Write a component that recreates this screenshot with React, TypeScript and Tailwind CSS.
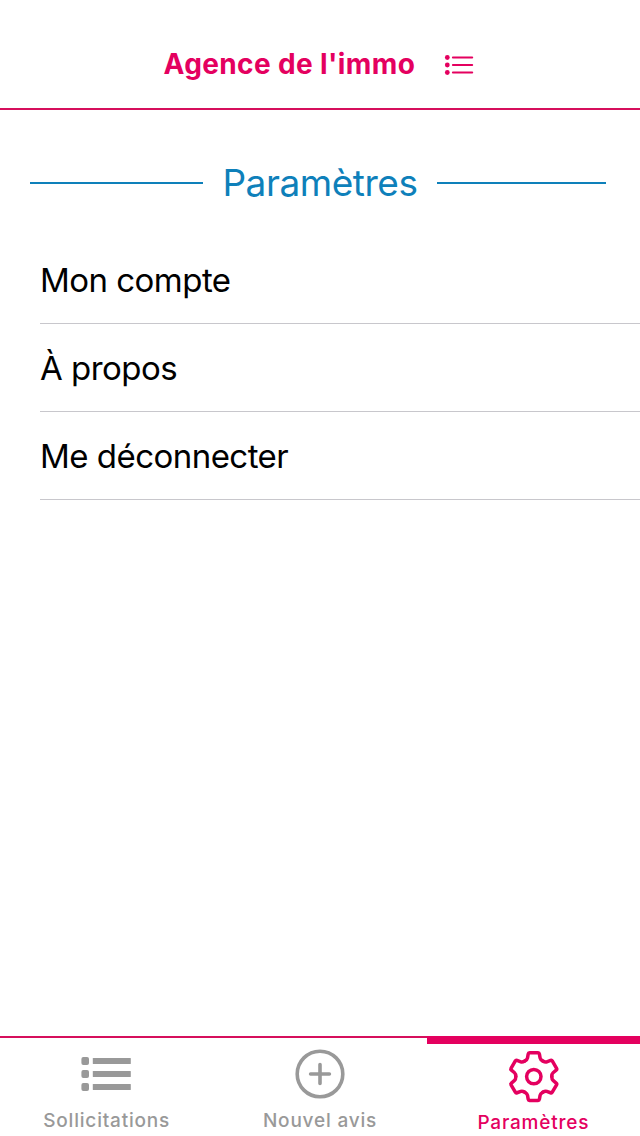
import type { ReactNode } from "react";

const menu = ["Mon compte", "À propos", "Me déconnecter"];

function HeaderListIcon() {
  return (
    <svg className="mt-0.5 h-[30px] w-[30px]" viewBox="0 0 30 30" fill="currentColor">
      {[7.5, 15, 22.5].map((y) => (
        <g key={y}>
          <circle cx="3.3" cy={y} r="2.4" />
          <rect x="7.9" y={y - 1} width="21.3" height="2" rx="1" />
        </g>
      ))}
    </svg>
  );
}

function ListIcon() {
  return (
    <svg className="h-[52px] w-[52px]" viewBox="0 0 52 52" fill="currentColor">
      {[13, 26, 39].map((y) => (
        <g key={y}>
          <rect x="0.4" y={y - 3.9} width="7.6" height="7.8" rx="2" />
          <rect x="11.8" y={y - 3} width="38" height="6" rx="0.6" />
        </g>
      ))}
    </svg>
  );
}

function PlusIcon() {
  return (
    <svg className="h-[52px] w-[52px]" viewBox="0 0 52 52" fill="none" stroke="currentColor" strokeLinecap="round">
      <circle cx="26" cy="26" r="22.8" strokeWidth="3.6" />
      <path d="M26 16.6V35.4M16.6 26H35.4" strokeWidth="3.6" />
    </svg>
  );
}

function GearIcon() {
  return (
    <svg
      className="h-[52px] w-[52px]"
      viewBox="-26.8 -25.6 52 52"
      fill="none"
      stroke="currentColor"
      strokeWidth="3.5"
      strokeLinecap="round"
      strokeLinejoin="round"
    >
      <circle r="7.2" />
      {[0, 60, 120, 180, 240, 300].map((angle) => (
        <path
          key={angle}
          transform={`rotate(${angle})`}
          d="M-9 -15.6C-7.4 -16.5 -6.5 -17.4 -6.3 -18.6L-5.6 -22.6Q-5.4 -23.8 -4.3 -23.8H4.3Q5.4 -23.8 5.6 -22.6L6.3 -18.6C6.5 -17.4 7.4 -16.5 9 -15.6"
        />
      ))}
    </svg>
  );
}

function Tab({ label, icon, active }: { label: string; icon: ReactNode; active?: boolean }) {
  return (
    <button
      className={
        active
          ? "flex flex-1 flex-col items-center border-t-8 border-[#e4005f] pt-[7px] text-[#e4005f]"
          : "flex flex-1 flex-col items-center border-t-2 border-[#d60f5c] pt-[10px] text-[#999999]"
      }
    >
      {icon}
      <span className={`${active ? "mt-2" : "mt-[9px]"} text-[19px] leading-6 font-medium tracking-[0.8px] whitespace-nowrap`}>
        {label}
      </span>
    </button>
  );
}

export default function App() {
  return (
    <div className="flex h-[1136px] w-[640px] flex-col overflow-hidden bg-white font-['Inter','Liberation_Sans',sans-serif]">
      <header className="flex h-[110px] shrink-0 items-center gap-[29px] border-b-2 border-[#d60f5c] pt-5 pl-[163.5px] text-[#e4005f]">
        <h1 className="text-[28px] leading-9 font-bold tracking-[0.37px] whitespace-nowrap">Agence de l'immo</h1>
        <HeaderListIcon />
      </header>

      <main className="flex-1">
        <div className="flex h-[126px] items-center pt-5 pr-[34px] pl-[30px] text-[#0e80ba]">
          <span className="h-0.5 w-[173px] bg-[#0e80ba]" />
          <h2 className="flex-1 text-center text-[37px] leading-[44px] tracking-[-0.45px] whitespace-nowrap">Paramètres</h2>
          <span className="h-0.5 w-[169px] bg-[#0e80ba]" />
        </div>
        <ul className="pl-10">
          {menu.map((item) => (
            <li
              key={item}
              className="flex h-[88px] items-center border-b border-[#c8c7cc] pt-0.5 text-[33px] tracking-[-0.53px] text-black"
            >
              {item}
            </li>
          ))}
        </ul>
      </main>

      <nav className="flex h-[100px] shrink-0">
        <Tab label="Sollicitations" icon={<ListIcon />} />
        <Tab label="Nouvel avis" icon={<PlusIcon />} />
        <Tab label="Paramètres" icon={<GearIcon />} active />
      </nav>
    </div>
  );
}
